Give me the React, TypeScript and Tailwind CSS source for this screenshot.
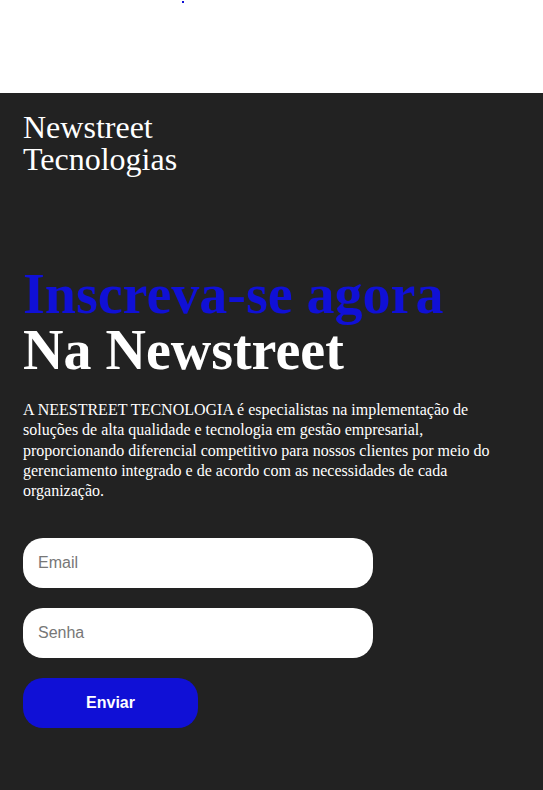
export default function App() {
  return (
    <div className="w-full min-h-[790px] flex flex-col bg-white">
      {/* top strip */}
      <div className="h-[93px] relative">
        <span className="absolute left-[182px] top-[1px] w-[2px] h-[2px] bg-[#1010d6]" />
      </div>
      <div className="flex-1 bg-[#222222] px-[23px] pt-[18px] pb-[62px]">
        <div className="text-white text-[32px] leading-[32px] font-['Liberation_Serif',serif]">
          <div>Newstreet</div>
          <div>Tecnologias</div>
        </div>
        <h1 className="mt-[91px] font-['Liberation_Serif',serif] font-bold text-[56px] leading-[56px]">
          <span className="block text-[#1010d6]">Inscreva-se agora</span>
          <span className="block text-white">Na Newstreet</span>
        </h1>
        <p className="mt-[22px] text-white text-[16px] leading-[20.3px] font-['Liberation_Serif',serif]">
          A NEESTREET TECNOLOGIA é especialistas na implementação de soluções de alta qualidade e tecnologia em gestão empresarial, proporcionando diferencial competitivo para nossos clientes por meio do gerenciamento integrado e de acordo com as necessidades de cada organização.
        </p>
        <form className="mt-[37px] flex flex-col gap-[20px] font-['Liberation_Sans',sans-serif]">
          <input
            type="email"
            placeholder="Email"
            className="w-[350px] h-[50px] rounded-[20px] bg-white px-[15px] text-[16px] text-gray-800 placeholder:text-[#777] outline-none"
          />
          <input
            type="password"
            placeholder="Senha"
            className="w-[350px] h-[50px] rounded-[20px] bg-white px-[15px] text-[16px] text-gray-800 placeholder:text-[#777] outline-none"
          />
          <button
            type="button"
            className="w-[175px] h-[50px] rounded-[20px] bg-[#1010d6] text-white font-bold text-[16px]"
          >
            Enviar
          </button>
        </form>
      </div>
    </div>
  )
}
